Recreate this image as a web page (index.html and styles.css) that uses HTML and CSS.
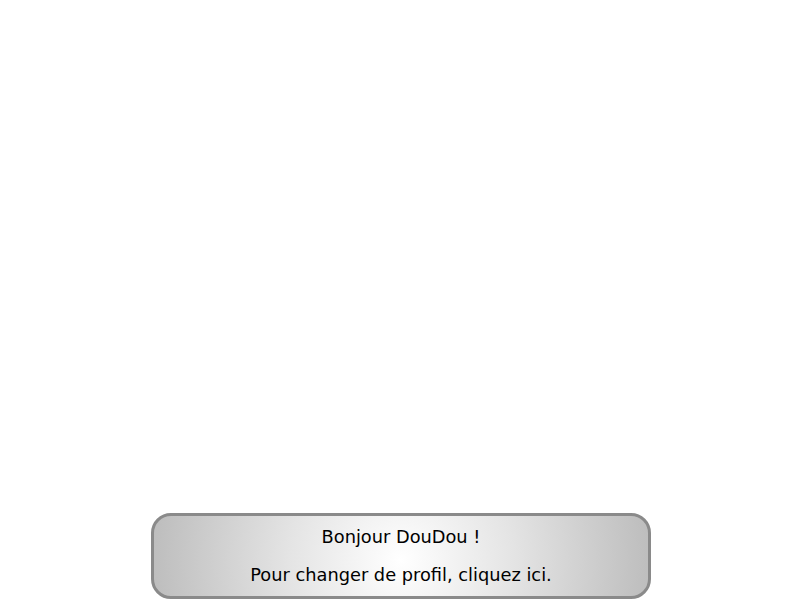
FILE: index.html
```html
<!DOCTYPE html>
<html lang="fr">
<head>
<meta charset="utf-8">
<title>Profil</title>
<link rel="stylesheet" href="styles.css">
</head>
<body>
<div class="page">
  <div class="welcome">
    <p class="line">Bonjour DouDou !</p>
    <p class="line">Pour changer de profil, cliquez ici.</p>
  </div>
</div>
</body>
</html>
```
FILE: styles.css
```css
html, body {
  margin: 0;
  padding: 0;
  background: #fff;
}
.page {
  width: 800px;
  height: 600px;
  display: flex;
  flex-direction: column;
  align-items: center;
  justify-content: flex-end;
  padding-bottom: 1px;
  box-sizing: border-box;
  padding-left: 2px;
}
.welcome {
  width: 500px;
  height: 86px;
  box-sizing: border-box;
  border: 3px solid #8a8a8a;
  border-radius: 20px;
  background: radial-gradient(circle 250px at 50% 55%, #ffffff 0%, #e4e4e4 45%, #bdbdbd 100%);
  padding: 11px 0;
  display: flex;
  flex-direction: column;
  gap: 18px;
  font-family: "DejaVu Sans", sans-serif;
  font-size: 17.8px;
  color: #000;
  text-align: center;
}
.line {
  margin: 0;
  line-height: 20px;
}
```
